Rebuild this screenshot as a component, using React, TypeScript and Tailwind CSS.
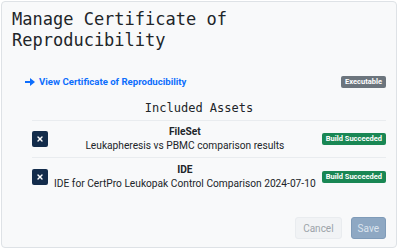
import { X } from 'lucide-react'

const assets = [
  { type: 'FileSet', name: 'Leukapheresis vs PBMC comparison results' },
  { type: 'IDE', name: 'IDE for CertPro Leukopak Control Comparison 2024-07-10' },
]

export default function App() {
  return (
    <div className="h-[252px] w-[400px] bg-white pl-px pt-px font-['Roboto',sans-serif]">
      <div className="flex h-[247px] w-[396px] flex-col rounded-[4px] border border-[#dee2e6] bg-[#f8f9fa] px-[10px] pt-[7px]">
        {/* Title */}
        <h1 className="font-['DejaVu_Sans_Mono',monospace] text-[17px] leading-[21px] text-[#212529]">
          Manage Certificate of
          <br />
          Reproducibility
        </h1>

        {/* Link + status */}
        <div className="mt-[24px] flex items-center justify-between pl-[13px]">
          <a className="flex items-center gap-[4px] text-[9.6px] font-bold text-[#0d6efd]">
            <svg width="10" height="8" viewBox="0 0 10 8" fill="currentColor">
              <rect x="0" y="3" width="6" height="2" />
              <path d="M5 0 L10 4 L5 8 Z" />
            </svg>
            View Certificate of Reproducibility
          </a>
          <span className="rounded-[2px] bg-[#6c757d] px-[4px] py-[1px] text-[7.5px] font-bold leading-[10px] text-white">
            Executable
          </span>
        </div>

        {/* Assets */}
        <h2 className="mt-[10px] text-center font-['DejaVu_Sans_Mono',monospace] text-[12px] leading-[18px] text-[#212529]">
          Included Assets
        </h2>
        <div className="mt-[3px] ml-[20px] border-t border-[#e9ecef]">
          {assets.map((a) => (
            <div key={a.type} className="flex h-[37px] items-center border-b border-[#e9ecef] last:border-b-0">
              <button className="flex h-[16px] w-[16px] items-center justify-center rounded-[2px] bg-[#132c4b] text-white">
                <X size={8} strokeWidth={4} />
              </button>
              <div className="flex-1 text-center text-[10.2px] leading-[14px] text-[#212529]">
                <div className="font-bold">{a.type}</div>
                <div>{a.name}</div>
              </div>
              <span className="rounded-[2px] bg-[#198754] px-[4px] py-[1px] text-[7.5px] font-bold leading-[10px] text-white">
                Build Succeeded
              </span>
            </div>
          ))}
        </div>

        {/* Footer */}
        <div className="mt-auto mb-[8px] flex justify-end gap-[9px]">
          <button className="h-[22px] rounded-[3px] border border-[#e9ecef] bg-[#f1f3f5] px-[7px] text-[10px] text-[#9ca3a9]">
            Cancel
          </button>
          <button className="h-[22px] rounded-[3px] border border-[#7f9bb8] bg-[#8ea8c3] px-[6px] text-[10px] text-[#dbe4ee]">
            Save
          </button>
        </div>
      </div>
    </div>
  )
}
